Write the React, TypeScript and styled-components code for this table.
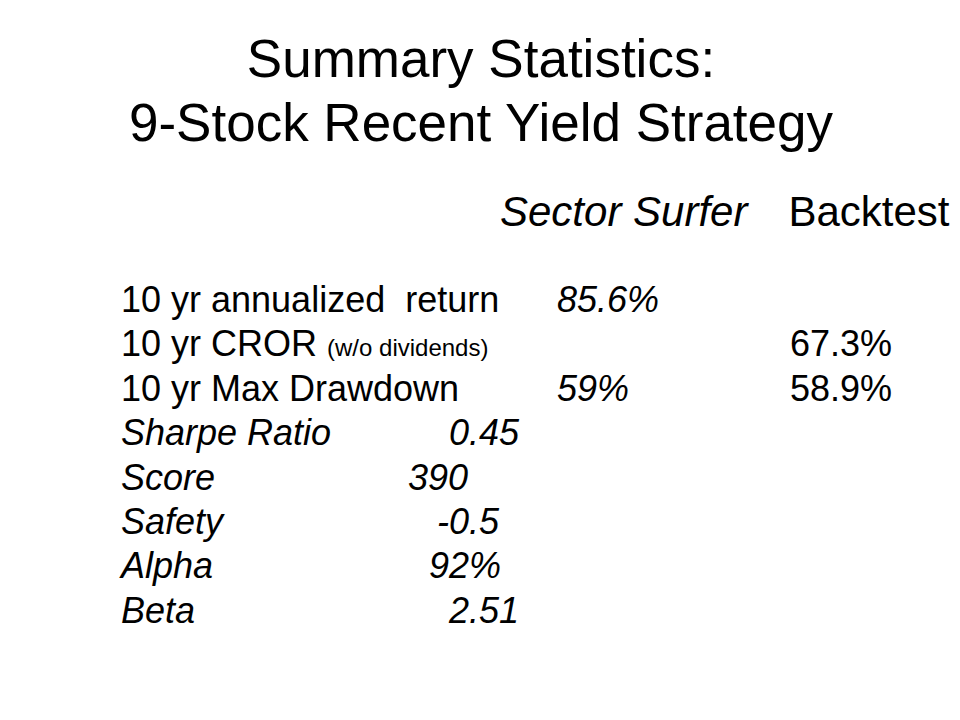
import React from "react";
import styled, { createGlobalStyle } from "styled-components";

const Global = createGlobalStyle`
  html, body { margin: 0; padding: 0; background: #ffffff; }
  body { font-family: "Liberation Sans", Arial, sans-serif; color: #000; }
`;

const Slide = styled.main`
  width: 960px;
  height: 720px;
  box-sizing: border-box;
  padding-top: 27px;
  display: flex;
  flex-direction: column;
  background: #fff;
  overflow: hidden;
`;

const Title = styled.h1`
  margin: 0;
  font-weight: normal;
  font-size: 53px;
  line-height: 64px;
  text-align: center;
  padding-left: 2px;
`;

const Header = styled.div`
  margin-top: 33px;
  display: flex;
  align-items: baseline;
  padding-left: 500px;
  font-size: 42px;
  line-height: 48px;
  gap: 41px;
  white-space: nowrap;
`;

const HeadCell = styled.span<{ $italic?: boolean }>`
  font-style: ${(p) => (p.$italic ? "italic" : "normal")};
`;

const Table = styled.section`
  margin-top: 42px;
  padding-left: 121px;
  display: flex;
  flex-direction: column;
`;

const Row = styled.div<{ $italic?: boolean }>`
  display: flex;
  align-items: baseline;
  font-size: 36px;
  line-height: 44.4px;
  height: 44.4px;
  white-space: pre;
  font-style: ${(p) => (p.$italic ? "italic" : "normal")};
`;

const Label = styled.span<{ $w: number }>`
  width: ${(p) => p.$w}px;
  flex: none;
`;

const Value = styled.span<{ $italic?: boolean; $w?: number }>`
  ${(p) => (p.$italic ? "font-style: italic;" : "")}
  ${(p) => (p.$w ? `width: ${p.$w}px; flex: none;` : "")}
`;

const Note = styled.span`
  font-size: 24px;
`;

const lower = [
  { label: "Sharpe Ratio", value: "0.45", x: 449 },
  { label: "Score", value: "390", x: 408 },
  { label: "Safety", value: "-0.5", x: 437 },
  { label: "Alpha", value: "92%", x: 429 },
  { label: "Beta", value: "2.51", x: 449 },
];

const LEFT = 121;
const COL1 = 557 - LEFT;
const COL2 = 233;

export default function App() {
  return (
    <>
      <Global />
      <Slide>
        <Title>
          Summary Statistics:
          <br />
          9-Stock Recent Yield Strategy
        </Title>
        <Header>
          <HeadCell $italic>Sector Surfer</HeadCell>
          <HeadCell>Backtest</HeadCell>
        </Header>
        <Table>
          <Row>
            <Label $w={COL1}>10 yr annualized  return</Label>
            <Value $italic $w={COL2}>85.6%</Value>
          </Row>
          <Row>
            <Label $w={COL1}>
              10 yr CROR <Note>(w/o dividends)</Note>
            </Label>
            <Value $w={COL2}>{"\u00A0"}</Value>
            <Value>67.3%</Value>
          </Row>
          <Row>
            <Label $w={COL1}>10 yr Max Drawdown</Label>
            <Value $italic $w={COL2}>59%</Value>
            <Value>58.9%</Value>
          </Row>
          {lower.map((r) => (
            <Row $italic key={r.label}>
              <Label $w={r.x - LEFT}>{r.label}</Label>
              <Value>{r.value}</Value>
            </Row>
          ))}
        </Table>
      </Slide>
    </>
  );
}
